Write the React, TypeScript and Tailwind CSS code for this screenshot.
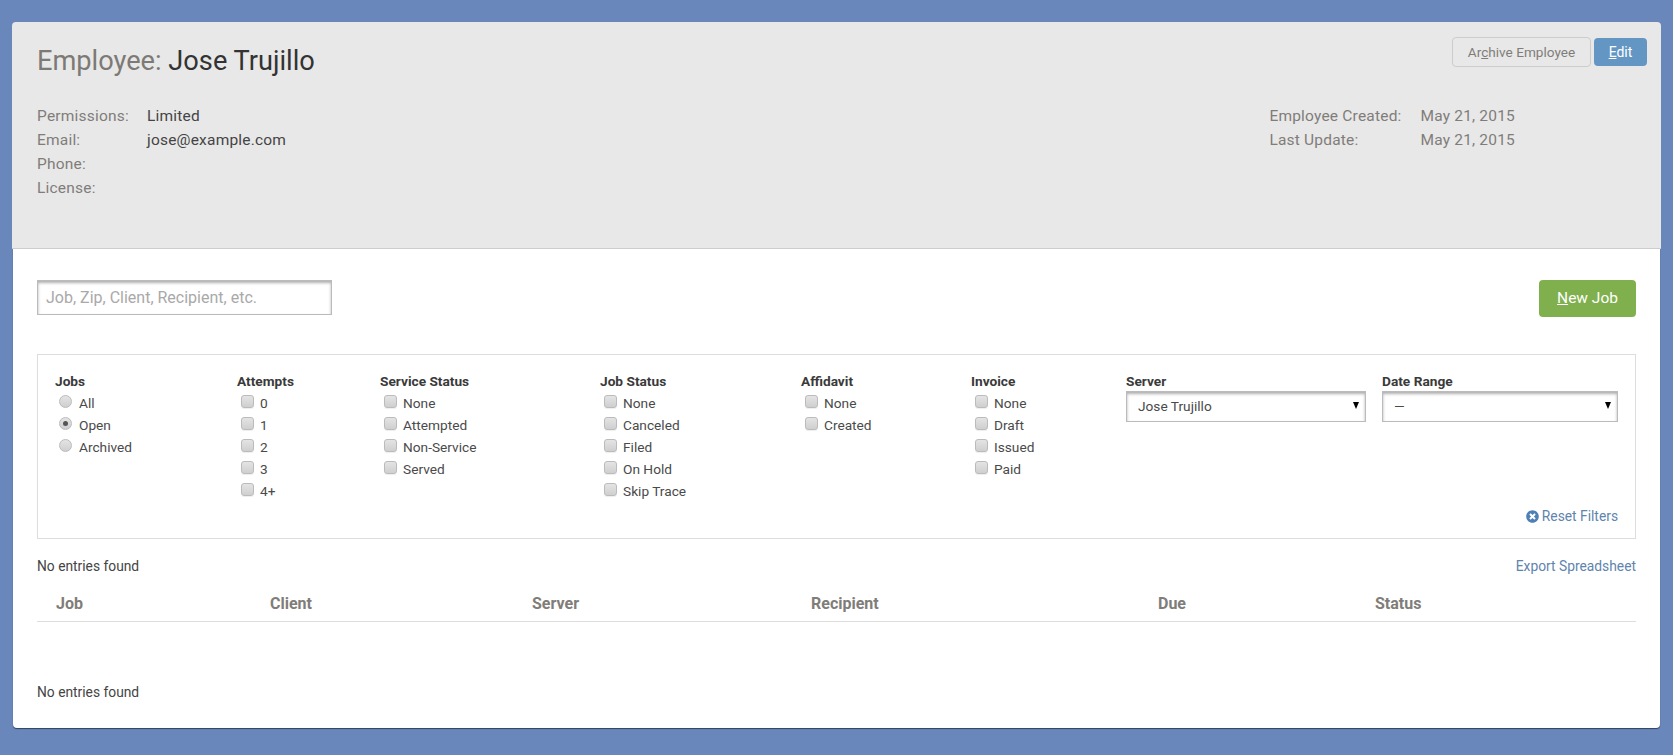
import React from 'react';
import { FaTimesCircle } from 'react-icons/fa';

const filterColumns = [
  { title: 'Attempts', width: 'w-[143px]', items: ['0', '1', '2', '3', '4+'] },
  { title: 'Service Status', width: 'w-[220px]', items: ['None', 'Attempted', 'Non-Service', 'Served'] },
  { title: 'Job Status', width: 'w-[201px]', items: ['None', 'Canceled', 'Filed', 'On Hold', 'Skip Trace'] },
  { title: 'Affidavit', width: 'w-[170px]', items: ['None', 'Created'] },
  { title: 'Invoice', width: 'w-[155px]', items: ['None', 'Draft', 'Issued', 'Paid'] },
];

const tableColumns = [
  { title: 'Job', width: 'w-[214px]' },
  { title: 'Client', width: 'w-[262px]' },
  { title: 'Server', width: 'w-[279px]' },
  { title: 'Recipient', width: 'w-[347px]' },
  { title: 'Due', width: 'w-[217px]' },
  { title: 'Status', width: 'flex-1' },
];

const checkboxClass =
  'appearance-none w-[13px] h-[13px] -mr-[1px] rounded-[3px] border border-[#bbb] bg-gradient-to-b from-[#e4e4e4] to-[#cfcfcf] shadow-[0_1px_1px_#eee] shrink-0';

const radioClass =
  'appearance-none w-[13px] h-[13px] rounded-full border border-[#bbb] bg-gradient-to-b from-[#e4e4e4] to-[#cfcfcf] shrink-0';

const selectClass =
  'appearance-none w-full h-[31px] pl-[11px] bg-white border border-[#bbb] shadow-[inset_0_2px_3px_#b0b0b0] text-[13.7px] text-[#4a4a4a] outline-none';

function Option({ label, children }: { label: string; children: React.ReactNode }) {
  return (
    <label className="flex items-center h-[22px] pl-[4px] gap-[7px] text-[13.7px] text-[#4a4a4a]">
      <span className="flex -translate-y-[2px]">{children}</span>
      <span>{label}</span>
    </label>
  );
}

function SelectField({ title, value, width }: { title: string; value: string; width: string }) {
  return (
    <div className={width}>
      <div className="text-[13.7px] font-bold text-[#3a3a3a] leading-[22px] -mt-[1px] -mb-[1px]">{title}</div>
      <div className="relative">
        <select className={selectClass} defaultValue={value}>
          <option>{value}</option>
        </select>
        <span className="absolute right-[7px] top-[11px] w-0 h-0 border-x-[3.5px] border-x-transparent border-t-[7px] border-t-black" />
      </div>
    </div>
  );
}

export default function App() {
  return (
    <div className="min-h-[755px] bg-[#6a87bc] pt-[22px] pl-[12px] pr-[12px] font-['Roboto',sans-serif]">
      {/* Employee header */}
      <div className="h-[227px] bg-[#e8e8e8] border-b border-[#ccc] rounded-t-[4px] pl-[25px] pr-[14px] pt-[24px] flex justify-between">
        <div>
          <h1 className="text-[27.2px] leading-[30px] text-[#333]">
            <span className="text-[#7d7a76]">Employee:</span> Jose Trujillo
          </h1>
          <div className="mt-[28px] grid grid-cols-[110px_1fr] text-[15.5px] leading-[24px] tracking-[0.2px]">
            <span className="text-[#807d79]">Permissions:</span>
            <span className="text-[#444]">Limited</span>
            <span className="text-[#807d79]">Email:</span>
            <span className="text-[#444]">jose@example.com</span>
            <span className="text-[#807d79]">Phone:</span>
            <span />
            <span className="text-[#807d79]">License:</span>
            <span />
          </div>
        </div>
        <div className="flex flex-col items-end">
          <div className="flex gap-[3px] items-center -mt-[9px]">
            <button className="h-[30px] w-[139px] rounded-[4px] border border-[#ccc] text-[13.6px] text-[#807d79]">
              Ar<span className="underline">c</span>hive Employee
            </button>
            <button className="h-[28px] w-[53px] rounded-[4px] bg-[#6496c3] text-[14px] text-white">
              <span className="underline">E</span>dit
            </button>
          </div>
          <div className="mt-[37px] mr-[132px] grid grid-cols-[151px_1fr] text-[15.5px] leading-[24px] tracking-[0.2px] text-[#807d79]">
            <span>Employee Created:</span>
            <span>May 21, 2015</span>
            <span>Last Update:</span>
            <span>May 21, 2015</span>
          </div>
        </div>
      </div>

      {/* Job list */}
      <div className="relative mx-[1px] h-[479px] bg-white rounded-b-[4px] shadow-[0_1px_1px_#33415c] pl-[24px] pr-[24px] pt-[31px]">
        <div className="flex justify-between items-start">
          <input
            placeholder="Job, Zip, Client, Recipient, etc."
            className="w-[295px] h-[35px] px-[8px] border border-[#bbb] shadow-[inset_0_2px_3px_#b0b0b0] text-[16px] text-[#444] placeholder:text-[#a9a9a9] outline-none"
          />
          <button className="w-[97px] h-[37px] rounded-[4px] bg-[#80b04e] text-[15.5px] text-white">
            <span className="underline">N</span>ew Job
          </button>
        </div>

        {/* Filters */}
        <div className="relative mt-[37px] h-[185px] border border-[#ddd] flex pl-[17px] pt-[16px]">
          <div className="w-[182px]">
            <div className="text-[13.7px] font-bold text-[#3a3a3a] leading-[22px] -mt-[1px]">Jobs</div>
            <Option label="All"><input type="radio" name="jobs" className={radioClass} /></Option>
            <Option label="Open">
              <span className="flex items-center justify-center w-[13px] h-[13px] rounded-full border border-[#bbb] bg-gradient-to-b from-[#e4e4e4] to-[#cfcfcf]">
                <span className="w-[5px] h-[5px] rounded-full bg-[#555]" />
              </span>
            </Option>
            <Option label="Archived"><input type="radio" name="jobs" className={radioClass} /></Option>
          </div>
          {filterColumns.map((col) => (
            <div key={col.title} className={col.width}>
              <div className="text-[13.7px] font-bold text-[#3a3a3a] leading-[22px] -mt-[1px]">{col.title}</div>
              {col.items.map((item) => (
                <Option key={item} label={item}><input type="checkbox" className={checkboxClass} /></Option>
              ))}
            </div>
          ))}
          <div className="flex gap-[16px]">
            <SelectField title="Server" value="Jose Trujillo" width="w-[240px]" />
            <SelectField title="Date Range" value="—" width="w-[236px]" />
          </div>
          <a className="absolute right-[17px] bottom-[11px] flex items-center gap-[3px] text-[13.8px] text-[#5f84ad]">
            <FaTimesCircle className="w-[13px] h-[13px] text-[#4f80b5]" />
            Reset Filters
          </a>
        </div>

        {/* Results */}
        <div className="mt-[18px] flex justify-between text-[13.8px] leading-[18px]">
          <span className="text-[#444]">No entries found</span>
          <a className="text-[#5f84ad]">Export Spreadsheet</a>
        </div>
        <div className="mt-[11px] h-[36px] flex items-center pl-[19px] border-b border-[#ddd] text-[16px] font-bold text-[#807d79]">
          {tableColumns.map((col) => (
            <div key={col.title} className={col.width}>{col.title}</div>
          ))}
        </div>
        <div className="mt-[61px] text-[13.8px] leading-[18px] text-[#444]">No entries found</div>
      </div>
    </div>
  );
}
